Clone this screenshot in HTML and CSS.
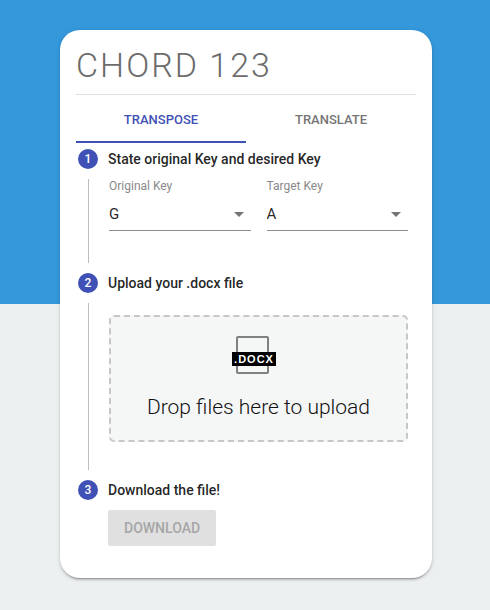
FILE: index.html
```html
<!DOCTYPE html>
<html lang="en">
<head>
<meta charset="utf-8">
<meta name="viewport" content="width=device-width, initial-scale=1">
<title>Chord 123</title>
<link rel="stylesheet" href="styles.css">
</head>
<body>
<main class="card">
  <h1 class="title">CHORD 123</h1>
  <nav class="tabs" role="tablist">
    <button class="tab tab-active" type="button" role="tab" aria-selected="true">TRANSPOSE</button>
    <button class="tab" type="button" role="tab" aria-selected="false">TRANSLATE</button>
  </nav>
  <ol class="steps">
    <li>
      <h2 class="step-label"><span class="step-number">1</span>State original Key and desired Key</h2>
      <div class="step-content fields">
        <div class="field">
          <label for="original">Original Key</label>
          <div class="select">
            <select id="original"><option>G</option><option>A</option></select>
            <svg class="arrow" viewBox="0 0 24 24" aria-hidden="true"><path d="M7 10l5 5 5-5z"/></svg>
          </div>
        </div>
        <div class="field">
          <label for="target">Target Key</label>
          <div class="select">
            <select id="target"><option>A</option><option>G</option></select>
            <svg class="arrow" viewBox="0 0 24 24" aria-hidden="true"><path d="M7 10l5 5 5-5z"/></svg>
          </div>
        </div>
      </div>
    </li>
    <li>
      <h2 class="step-label"><span class="step-number">2</span>Upload your .docx file</h2>
      <div class="step-content upload">
        <button class="dropzone" type="button">
          <span class="file-icon"><span class="file-type">.DOCX</span></span>
          <span class="drop-text">Drop files here to upload</span>
        </button>
      </div>
    </li>
    <li>
      <h2 class="step-label"><span class="step-number">3</span>Download the file!</h2>
      <div class="step-content step-last">
        <button class="download" type="button" disabled>DOWNLOAD</button>
      </div>
    </li>
  </ol>
</main>
</body>
</html>
```

FILE: styles.css
```css
* {
  box-sizing: border-box;
}

body {
  margin: 0;
  padding: 30px 58px 32px 60px;
  min-height: 100vh;
  background: linear-gradient(#3498db 304px, #ecf0f1 304px);
  color: rgba(0, 0, 0, 0.87);
  font-family: Roboto, sans-serif;
  font-size: 14px;
}

button,
select {
  font: inherit;
}

.card {
  padding: 16px 16px 32px;
  border-radius: 20px;
  background: #fff;
  box-shadow: 0 3px 1px -2px rgba(0, 0, 0, 0.2), 0 2px 2px 0 rgba(0, 0, 0, 0.14), 0 1px 5px 0 rgba(0, 0, 0, 0.12);
}

.title {
  margin: 0;
  padding-bottom: 10px;
  border-bottom: 1px solid #e0e0e0;
  color: #6c6c6c;
  font-size: 34px;
  font-weight: 300;
  line-height: 38px;
  letter-spacing: 2px;
}

.tabs {
  display: flex;
}

.tab {
  flex: 1;
  height: 48px;
  padding: 2px 0 0;
  border: 0;
  border-bottom: 2px solid transparent;
  background: none;
  color: #757575;
  font-size: 13px;
  font-weight: 500;
}

.tab-active {
  border-color: #3f51b5;
  color: #3f51b5;
}

.steps {
  margin: 0;
  padding: 4px 0 0;
  list-style: none;
}

.step-label {
  display: flex;
  align-items: center;
  gap: 10px;
  height: 24px;
  margin: 0;
  padding-left: 2px;
  font-size: 14px;
  font-weight: 500;
}

.step-number {
  width: 20px;
  height: 20px;
  border-radius: 50%;
  background: #3f51b5;
  color: #fff;
  font-size: 12px;
  line-height: 20px;
  text-align: center;
}

.step-content {
  margin: 8px 0 8px 12px;
  padding: 0 8px 0 20px;
  border-left: 1px solid #bdbdbd;
}

.fields {
  display: flex;
  gap: 16px;
  padding-bottom: 32px;
}

.field {
  flex: 1;
}

.field label {
  display: block;
  color: #8a8a8a;
  font-size: 12px;
  line-height: 14px;
}

.select {
  display: grid;
  align-items: center;
  margin-top: 4px;
  border-bottom: 1px solid #8c8c8c;
}

.select select,
.arrow {
  grid-area: 1 / 1;
}

.select select {
  width: 100%;
  height: 33px;
  padding: 0 24px 0 0;
  border: 0;
  background: none;
  color: inherit;
  font-size: 15px;
  appearance: none;
}

.arrow {
  width: 24px;
  height: 24px;
  justify-self: end;
  fill: #757575;
  pointer-events: none;
}

.upload {
  padding-top: 12px;
  padding-bottom: 28px;
}

.dropzone {
  display: flex;
  flex-direction: column;
  align-items: center;
  gap: 20px;
  width: 100%;
  padding: 19px 0 20px;
  border: 2px dashed #c7c7c7;
  border-radius: 5px;
  background: #f5f7f7;
  color: #111;
}

.file-icon {
  display: flex;
  align-items: flex-end;
  justify-content: center;
  width: 33px;
  height: 38px;
  margin-right: 12px;
  padding-bottom: 6px;
  border: 2px solid #808080;
  border-radius: 2px;
}

.file-type {
  flex: none;
  width: 44px;
  margin-left: 3px;
  background: #000;
  color: #fff;
  font-family: "Liberation Sans", sans-serif;
  font-size: 11px;
  font-weight: 700;
  line-height: 14px;
  letter-spacing: 1px;
}

.drop-text {
  font-size: 21px;
  font-weight: 300;
  line-height: 26px;
}

.step-last {
  margin-bottom: 0;
  border-left: 0;
}

.download {
  height: 36px;
  padding: 0 16px;
  border: 0;
  border-radius: 2px;
  background: #e0e0e0;
  color: #a6a6a6;
  font-weight: 500;
}
```
